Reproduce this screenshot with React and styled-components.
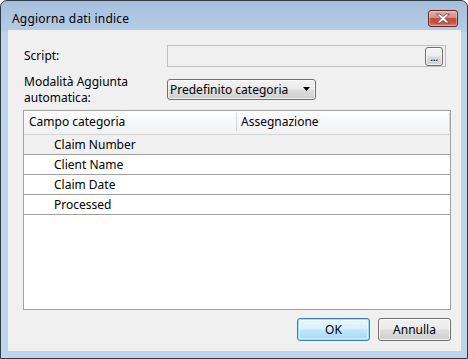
import React from "react";
import styled, { createGlobalStyle } from "styled-components";

const Global = createGlobalStyle`
  html, body { margin: 0; padding: 0; background: #ffffff; }
  body { font-family: "Noto Sans", "Open Sans", sans-serif; font-size: 12px; color: #000; }
  * { box-sizing: border-box; }
`;

const Window = styled.div`
  width: 468px;
  height: 359px;
  display: flex;
  flex-direction: column;
  border: 1px solid #2d3a48;
  border-radius: 7px 7px 0 0;
  background: linear-gradient(to bottom, #a7bfdb 0px, #b5cce6 30px, #bcd4ec 31px, #bcd4ec 100%);
  overflow: hidden;
`;

const TitleBar = styled.div`
  height: 29px;
  display: flex;
  align-items: flex-start;
  justify-content: space-between;
  padding: 0 9px 0 11px;
`;

const Title = styled.span`
  margin-top: 10px;
  font-size: 12px;
  line-height: 15px;
  letter-spacing: 0.2px;
  color: #000;
`;

const CloseButton = styled.div`
  margin-top: 9px;
  width: 30px;
  height: 17px;
  border: 1px solid #5a2a28;
  border-radius: 3px;
  background: linear-gradient(to bottom, #e8b1a7 0%, #d98d80 45%, #c54e3d 50%, #c7503f 75%, #dc7f6c 100%);
  box-shadow: inset 0 0 0 1px rgba(255, 220, 210, 0.45);
  display: flex;
  align-items: center;
  justify-content: center;
`;

const Client = styled.div`
  flex: 1;
  margin: 0 6px 7px 7px;
  background: #f0f0f0;
  display: flex;
  flex-direction: column;
  padding: 15px 10px 10px 15px;
`;

const FieldRow = styled.div`
  display: flex;
  align-items: center;
  height: ${(p) => p.$h}px;
  margin-top: ${(p) => p.$gap || 0}px;
`;

const Label = styled.div`
  width: 144px;
  padding-left: 1px;
  line-height: 16px;
  flex-shrink: 0;
`;

const TextBox = styled.div`
  flex: 1;
  height: 22px;
  margin-right: 5px;
  border: 1px solid #bfbfbf;
  background: #f0f0f0;
  display: flex;
  justify-content: flex-end;
  align-items: flex-start;
  padding: 1px 2px 0 0;
`;

const BrowseButton = styled.div`
  width: 18px;
  height: 19px;
  border: 1px solid #707070;
  border-radius: 3px;
  background: linear-gradient(to bottom, #f6f6f6 0%, #ececec 48%, #dcdcdc 52%, #d0d0d0 100%);
  box-shadow: inset 0 0 0 1px rgba(255,255,255,0.7);
  font-size: 11px;
  line-height: 11px;
  display: flex;
  align-items: flex-end;
  justify-content: center;
  padding-bottom: 3px;
  letter-spacing: -0.5px;
`;

const Combo = styled.div`
  width: 149px;
  height: 21px;
  border: 1px solid #707070;
  border-radius: 3px;
  background: linear-gradient(to bottom, #f2f2f2 0%, #ebebeb 48%, #dddddd 52%, #cfcfcf 100%);
  box-shadow: inset 0 0 0 1px rgba(255,255,255,0.65);
  display: flex;
  align-items: center;
  justify-content: space-between;
  padding: 0 4px 0 2px;
`;

const Table = styled.div`
  margin-top: 10px;
  flex: 1;
  border: 1px solid #a0a0a0;
  background: #ffffff;
  display: flex;
  flex-direction: column;
`;

const Header = styled.div`
  height: 24px;
  display: flex;
  background: linear-gradient(to bottom, #ffffff 0%, #f7f8fa 40%, #f1f2f4 100%);
  border-bottom: 1px solid #d5d5d5;
`;

const HeaderCell = styled.div`
  width: ${(p) => p.$w}px;
  flex-shrink: 0;
  position: relative;
  padding-left: ${(p) => p.$pad}px;
  line-height: 22px;
  &::after {
    content: "";
    position: absolute;
    right: 0;
    top: 2px;
    bottom: 3px;
    width: 1px;
    background: #d5d5d5;
  }
`;

const Row = styled.div`
  height: 20px;
  border-bottom: 1px solid #a0a0a0;
  background: ${(p) => (p.$current ? "#f0f0f0" : "#ffffff")};
  padding-left: 30px;
  line-height: 19px;
`;

const ButtonBar = styled.div`
  margin-top: 8px;
  display: flex;
  justify-content: flex-end;
  gap: 8px;
`;

const Button = styled.div`
  width: 73px;
  height: 23px;
  border: 1px solid ${(p) => (p.$default ? "#3c7fb1" : "#707070")};
  border-radius: 3px;
  background: ${(p) =>
    p.$default
      ? "linear-gradient(to bottom, #eaf6fd 0%, #d9f0fc 48%, #bee6fd 52%, #a7d9f5 100%)"
      : "linear-gradient(to bottom, #f2f2f2 0%, #ebebeb 48%, #dddddd 52%, #cfcfcf 100%)"};
  box-shadow: ${(p) =>
    p.$default
      ? "inset 0 0 0 1px #98e0f8, inset 0 0 0 2px rgba(255,255,255,0.5)"
      : "inset 0 0 0 1px rgba(255,255,255,0.7)"};
  display: flex;
  align-items: center;
  justify-content: center;
  line-height: 15px;
`;

const CloseIcon = () => (
  <svg width="16" height="11" viewBox="0 0 16 11">
    <path
      d="M1.5 1 L5 1 L8 3.5 L11 1 L14.5 1 L10 5.5 L14.5 10 L11 10 L8 7.5 L5 10 L1.5 10 L6 5.5 Z"
      fill="#ffffff"
      stroke="#5b3030"
      strokeWidth="0.8"
      strokeLinejoin="round"
    />
  </svg>
);

const ArrowDown = () => (
  <svg width="8" height="5" viewBox="0 0 8 5">
    <path d="M0 0 L7 0 L3.5 4 Z" fill="#000" />
  </svg>
);

const rows = ["Claim Number", "Client Name", "Claim Date", "Processed"];

export default function App() {
  return (
    <>
      <Global />
      <Window>
        <TitleBar>
          <Title>Aggiorna dati indice</Title>
          <CloseButton>
            <CloseIcon />
          </CloseButton>
        </TitleBar>
        <Client>
          <FieldRow $h={22}>
            <Label>Script:</Label>
            <TextBox>
              <BrowseButton>...</BrowseButton>
            </TextBox>
          </FieldRow>
          <FieldRow $h={21} $gap={12}>
            <Label>
              Modalità Aggiunta
              <br />
              automatica:
            </Label>
            <Combo>
              <span>Predefinito categoria</span>
              <ArrowDown />
            </Combo>
          </FieldRow>
          <Table>
            <Header>
              <HeaderCell $w={213} $pad={5}>Campo categoria</HeaderCell>
              <HeaderCell $w={213} $pad={4}>Assegnazione</HeaderCell>
            </Header>
            {rows.map((r, i) => (
              <Row key={r} $current={i === 0}>
                {r}
              </Row>
            ))}
          </Table>
          <ButtonBar>
            <Button $default>OK</Button>
            <Button>Annulla</Button>
          </ButtonBar>
        </Client>
      </Window>
    </>
  );
}
